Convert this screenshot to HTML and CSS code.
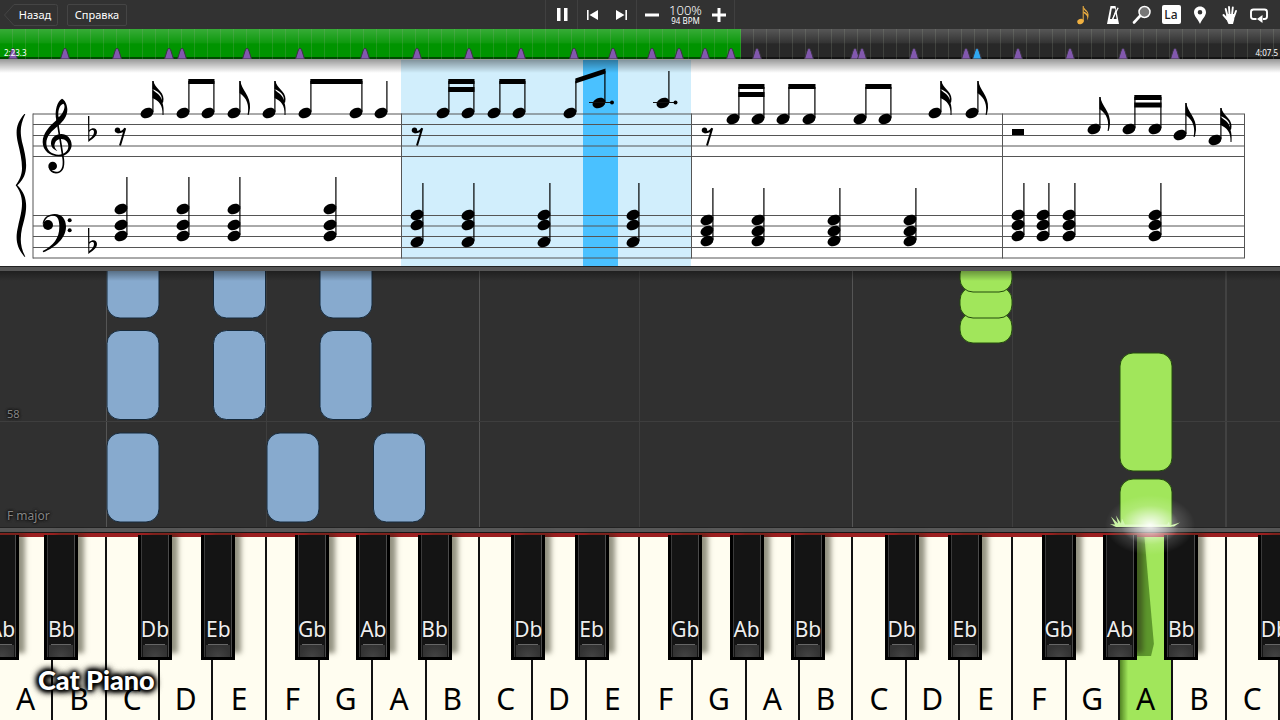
FILE: index.html
```html
<!DOCTYPE html>
<html lang="ru">

<head>
    <meta charset="UTF-8">
    <meta name="viewport" content="width=device-width, initial-scale=1.0">
    <title>Cat Piano</title>
    <link rel="stylesheet" href="styles.css">
</head>

<body>

    <header class="toolbar">
        <nav class="menu">
            <button type="button" class="menu-button back">
                <svg class="back-shape" width="54" height="22" viewBox="0 0 54 22"><path d="M10 .5H51.500Q53.500 .5 53.500 2.500V19.500Q53.500 21.500 51.500 21.500H10Q5 16 .5 11Q5 6 10 .5z" /></svg>
                Назад
            </button>
            <button type="button" class="menu-button help">Справка</button>
        </nav>

        <div class="transport">
            <button type="button" class="play" aria-label="Pause">
                <svg width="12" height="13" viewBox="0 0 12 13"><path d="M1 0h3.500v13H1zM8 0h3.500v13H8z" /></svg>
            </button>
            <div class="skip">
                <button type="button" aria-label="Previous">
                    <svg width="12" height="10" viewBox="0 0 12 10"><path d="M0 0h1.600v10H0zM11 0v10L2.500 5z" /></svg>
                </button>
                <button type="button" aria-label="Next">
                    <svg width="12" height="10" viewBox="0 0 12 10"><path d="M10.400 0H12v10h-1.600zM1 0v10l8.500-5z" /></svg>
                </button>
            </div>
            <div class="tempo">
                <button type="button" aria-label="Slower">
                    <svg width="14" height="14" viewBox="0 0 14 14"><path d="M0 5.500h14v3H0z" /></svg>
                </button>
                <div class="tempo-value">
                    <span class="percent">100%</span>
                    <span class="bpm">94 BPM</span>
                </div>
                <button type="button" aria-label="Faster">
                    <svg width="14" height="14" viewBox="0 0 14 14"><path d="M0 5.500h14v3H0zM5.500 0h3v14h-3z" /></svg>
                </button>
            </div>
        </div>

        <div class="tools">
            <button type="button" aria-label="Notes">
                <svg class="gold" width="20" height="22" viewBox="0 0 20 22"><ellipse cx="7.500" cy="17.500" rx="3.300" ry="2.600" transform="rotate(-20 7.500 17.500)" /><path d="M9.700 2h1v15.500h-1z" /><path d="M10.500 2c.5 3.500 5 4.500 5 8.500c0 1 0 4-1.200 6c.5-4-.3-5.500-3.800-7.500V7.500c2 .7 3 1.500 4 3c0-3-4-4-4-6z" /></svg>
            </button>
            <button type="button" aria-label="Metronome">
                <svg width="20" height="22" viewBox="0 0 20 22"><path fill-rule="evenodd" d="M7.500 2h5l3.500 18H4zM8.800 4.500L7 15h2.200L12.500 6l-.4-1.500zM12.500 8.500L10.400 15h3.200z" /><path d="M14.500 3.500l1.200.6L10.300 15H9z" /></svg>
            </button>
            <button type="button" aria-label="Zoom">
                <svg width="20" height="22" viewBox="0 0 20 22"><circle cx="12.500" cy="8" r="5.500" fill="#777" stroke="#fff" stroke-width="1.500" /><path d="M8 12L2 18.500" stroke="#fff" stroke-width="2.600" stroke-linecap="round" /></svg>
            </button>
            <button type="button" class="la" aria-label="Note names">La</button>
            <button type="button" aria-label="Bookmark">
                <svg width="20" height="22" viewBox="0 0 20 22"><path fill-rule="evenodd" d="M10 2.500c3.500 0 6 2.600 6 5.800C16 12 12.500 14.500 10 20C7.500 14.500 4 12 4 8.300C4 5.100 6.500 2.500 10 2.500zM10 6a2.300 2.300 0 100 4.600A2.300 2.300 0 0010 6z" /></svg>
            </button>
            <button type="button" aria-label="Hands">
                <svg width="20" height="22" viewBox="0 0 20 22"><path class="line" d="M7.500 12L5.700 5M9.500 11L9 3M12 11l.8-7.500M14 12.500L16 7M7 15L3.500 11" stroke-width="1.900" stroke-linecap="round" /><path d="M6.500 10h8.200l-.5 5.500L13 20H8.500L6 14.500z" /></svg>
            </button>
            <button type="button" aria-label="Loop">
                <svg width="20" height="22" viewBox="0 0 20 22"><path class="line" d="M7.500 15H4.500Q2 15 2 12.500V8Q2 5.500 4.500 5.500H15.500Q18 5.500 18 8V12.500Q18 15 15.500 15H14" stroke-width="1.900" /><path d="M8 15l5.500-4v8z" /></svg>
            </button>
        </div>
    </header>

    <div class="timeline">
        <input type="range" class="seek" aria-label="Position" min="0" max="1280" value="741" style="--played: 57.9%">
        <svg class="markers" viewBox="0 0 1280 11" aria-hidden="true">
            <defs><path id="marker" d="M0 0Q1 0 2 3L4.500 11H-4.500L-2 3Q-1 0 0 0z" /></defs>
            <use href="#marker" x="13" /><use href="#marker" x="65" /><use href="#marker" x="117" />
            <use href="#marker" x="169" /><use href="#marker" x="182" /><use href="#marker" x="247" />
            <use href="#marker" x="300" /><use href="#marker" x="365" /><use href="#marker" x="417" />
            <use href="#marker" x="469" /><use href="#marker" x="521" /><use href="#marker" x="574" />
            <use href="#marker" x="613" /><use href="#marker" x="652" /><use href="#marker" x="679" />
            <use href="#marker" x="705" /><use href="#marker" x="731" /><use href="#marker" x="757" />
            <use href="#marker" x="809" /><use href="#marker" x="855" /><use href="#marker" x="862" />
            <use href="#marker" x="914" /><use href="#marker" x="966" /><use href="#marker" x="977" class="current" />
            <use href="#marker" x="1018" /><use href="#marker" x="1070" /><use href="#marker" x="1123" />
            <use href="#marker" x="1175" />
        </svg>
        <span class="time elapsed">2:23.3</span>
        <span class="time total">4:07.5</span>
    </div>

    <main>
        <section class="score">
            <svg viewBox="0 60 1280 206" role="img" aria-label="Score">
                <defs>
                    <ellipse id="head" rx="6.700" ry="5" transform="rotate(-24)" />
                    <g id="quarter"><use href="#head" /><path d="M5.300 -32h1.200V-1h-1.200z" /></g>
                    <g id="eighth"><use href="#quarter" /><path d="M5.500 -32H6.500C7 -24 17 -17 16 -5Q15.600 -1 14.600 2H13.600C15.500 -8 13 -15 5.500 -20z" /></g>
                    <g id="sixteenth"><use href="#quarter" /><path d="M5.500 -32H6.500C7.500 -25 16.500 -22 16.500 -14Q16.500 -11 15.500 -10Q17 -6 16.500 2H15.500C16 -8 12 -12 5.500 -15V-23C10 -20 13.500 -18 14.800 -13C15.500 -19 10 -22 5.500 -24z" /></g>
                    <g id="rest"><circle cx="-2.500" cy="3.200" r="2.700" /><path class="stroke" d="M-2.500 5.400Q3 5.500 5.200 1.300L0 18.500" /></g>
                    <g id="chord-a"><use href="#head" y="209" /><use href="#head" y="225" /><use href="#head" y="236" /><path d="M5.300 177h1.200v58h-1.200z" /></g>
                    <g id="chord-b"><use href="#head" y="215" /><use href="#head" y="225" /><use href="#head" y="242" /><path d="M5.300 183h1.200v58h-1.200z" /></g>
                    <g id="chord-c"><use href="#head" y="220" /><use href="#head" y="231" /><use href="#head" y="241" /><path d="M5.300 188h1.200v52h-1.200z" /></g>
                    <g id="chord-d"><use href="#head" y="215" /><use href="#head" y="225" /><use href="#head" y="236" /><path d="M5.300 183h1.200v52h-1.200z" /></g>
                    <path id="flat" fill-rule="evenodd" d="M264 168h4v42C278 201 291 204 291 216C291 230 274 238 265 246zM268 216V237C276 231 282 224 282 216C282 208 273 209 268 216z" />
                </defs>

                <rect class="bar-now" x="401" y="60" width="290" height="206" />
                <rect class="beat-now" x="583" y="60" width="35" height="206" />

                <path class="staff" d="M33 114H1244M33 124.500H1244M33 135.500H1244M33 146H1244M33 156.500H1244M33 215.500H1244M33 226H1244M33 236.500H1244M33 247.500H1244M33 258H1244" />
                <path class="barline" d="M33 113.500V258.500M401.500 113.500V258.500M691.500 113.500V258.500M1002.500 113.500V258.500M1244.500 113.500V258.500" />

                <!-- brace, clefs, key signature -->
                <g transform="translate(0 60) scale(.3333)">
                    <path d="M76 162C60 195 60 215 66 245C74 275 80 300 78 325C76 350 64 366 52 376C64 388 76 404 78 430C80 455 74 475 66 505C60 535 60 560 76 590L73 590C48 560 46 535 54 500C60 472 66 455 66 430C66 408 58 390 47 376C58 362 66 345 66 325C66 300 60 275 54 250C46 215 48 190 73 162z" />
                    <path fill-rule="evenodd" d="M186 116C172 124 163 150 169 181C149 198 128 220 128 246C128 272 150 289 176 289C200 289 215 272 215 254C215 236 200 222 184 222C166 222 153 234 153 250C153 262 162 270 172 273C164 264 162 258 164 252C166 242 174 237 184 237C196 237 205 246 205 259C205 274 192 284 176 284C156 284 139 272 139 250C139 228 156 212 174 198C190 184 202 170 202 148C202 134 194 119 186 116zM190 131C199 138 190 160 176 172C172 156 178 134 190 131z" />
                    <path class="stroke clef-stem" d="M171 178L190 298C193 325 184 338 168 338Q152 337 148 322" />
                    <circle cx="158" cy="318" r="13" />
                    <circle cx="144" cy="495" r="15" />
                    <path d="M128 494C128 472 146 462 164 462C186 462 198 478 198 500C198 535 165 562 130 577L128 573C160 556 178 535 178 500C178 478 172 467 160 467C146 467 138 474 134 484z" />
                    <circle cx="209" cy="481" r="6" />
                    <circle cx="209" cy="511" r="6" />
                    <use href="#flat" />
                    <use href="#flat" y="336" />
                </g>

                <!-- bar 1 -->
                <use href="#rest" x="120" y="127" />
                <use href="#sixteenth" x="147" y="113" />
                <use href="#quarter" x="183" y="113" /><use href="#quarter" x="208" y="113" />
                <path d="M188.300 79H214.500v5H188.300z" />
                <use href="#eighth" x="234" y="113" />
                <use href="#sixteenth" x="269" y="113" />
                <use href="#quarter" x="305" y="113" /><use href="#quarter" x="356" y="113" />
                <path d="M310.300 79H362.500v5H310.300z" />
                <use href="#quarter" x="381" y="113" />
                <use href="#chord-a" x="121" /><use href="#chord-a" x="183" />
                <use href="#chord-a" x="234" /><use href="#chord-a" x="330" />

                <!-- bar 2 -->
                <use href="#rest" x="417" y="127" />
                <use href="#quarter" x="443" y="113" /><use href="#quarter" x="468" y="113" />
                <path d="M448.300 79H474.500v5H448.300zM448.300 87H474.500v5H448.300z" />
                <use href="#quarter" x="494" y="113" /><use href="#quarter" x="519" y="113" />
                <path d="M499.300 79H525.500v5H499.300z" />
                <use href="#quarter" x="570" y="113" />
                <use href="#quarter" x="599" y="103" />
                <path d="M575.300 78.500L605.500 68.500V73.500L575.300 83.500z" />
                <use href="#quarter" x="663" y="103" />
                <path class="staff ledger" d="M589 102.500H611M653 102.500H675" />
                <circle cx="612" cy="102.500" r="2" /><circle cx="675.500" cy="102.500" r="2" />
                <use href="#chord-b" x="417" /><use href="#chord-b" x="468" />
                <use href="#chord-b" x="544" /><use href="#chord-b" x="633" />

                <!-- bar 3 -->
                <use href="#rest" x="707" y="127" />
                <use href="#quarter" x="733" y="119" /><use href="#quarter" x="758" y="119" />
                <path d="M738.300 84H764.500v5H738.300zM738.300 92H764.500v5H738.300z" />
                <use href="#quarter" x="783" y="119" /><use href="#quarter" x="809" y="119" />
                <path d="M788.300 84H815.500v5H788.300z" />
                <use href="#quarter" x="860" y="119" /><use href="#quarter" x="885" y="119" />
                <path d="M865.300 84H891.500v5H865.300z" />
                <use href="#sixteenth" x="935" y="113" />
                <use href="#eighth" x="972" y="113" />
                <use href="#chord-c" x="707" /><use href="#chord-c" x="758" />
                <use href="#chord-c" x="834" /><use href="#chord-c" x="910" />

                <!-- bar 4 -->
                <path d="M1012 129h12v6h-12z" />
                <use href="#eighth" x="1094" y="129" />
                <use href="#quarter" x="1129" y="129" /><use href="#quarter" x="1155" y="129" />
                <path d="M1134.300 95H1161.500v5H1134.300zM1134.300 102.500H1161.500v5H1134.300z" />
                <use href="#eighth" x="1180" y="135" />
                <use href="#sixteenth" x="1215" y="140" />
                <use href="#chord-d" x="1018" /><use href="#chord-d" x="1043" />
                <use href="#chord-d" x="1069" /><use href="#chord-d" x="1155" />
            </svg>
        </section>

        <section class="roll">
            <svg viewBox="0 271 1280 256" role="img" aria-label="Falling notes">
                <path class="grid-c" d="M106.500 271V527M479.500 271V527M852.500 271V527M1226 271V527" />
                <path class="grid-f" d="M266.500 271V527M639.500 271V527M1012.500 271V527M0 421.500H1280" />

                <g class="left-hand">
                    <rect x="107" y="229" width="52" height="89" rx="13" />
                    <rect x="213.500" y="229" width="52" height="89" rx="13" />
                    <rect x="320" y="229" width="52" height="89" rx="13" />
                    <rect x="107" y="330.500" width="52" height="89" rx="13" />
                    <rect x="213.500" y="330.500" width="52" height="89" rx="13" />
                    <rect x="320" y="330.500" width="52" height="89" rx="13" />
                    <rect x="107" y="433" width="52" height="89" rx="13" />
                    <rect x="267" y="433" width="52" height="89" rx="13" />
                    <rect x="373.500" y="433" width="52" height="89" rx="13" />
                </g>
                <g class="right-hand">
                    <rect x="960" y="313" width="52" height="30" rx="13" />
                    <rect x="960" y="287" width="52" height="31" rx="13" />
                    <rect x="960" y="261" width="52" height="31" rx="13" />
                    <rect x="1120" y="353" width="52" height="118" rx="13" />
                    <rect x="1120" y="479" width="52" height="70" rx="13" />
                </g>
                <path class="spark" d="M1116 527l-6-3l5 .5l-4-8l7 7l-2-8l5 8l1-5l3 6h42l2-3l1 4l10-3l-6 4z" />
            </svg>
            <span class="roll-label bar-number">58</span>
            <span class="roll-label key-name">F major</span>
            <div class="glow"></div>
        </section>

        <section class="piano">
            <div class="key">A<span class="black g first">Ab</span><span class="black a">Bb</span></div>
            <div class="key">B</div>
            <div class="key">C<span class="black c">Db</span></div>
            <div class="key">D<span class="black d">Eb</span></div>
            <div class="key">E</div>
            <div class="key">F<span class="black f">Gb</span></div>
            <div class="key">G<span class="black g">Ab</span></div>
            <div class="key">A<span class="black a">Bb</span></div>
            <div class="key">B</div>
            <div class="key">C<span class="black c">Db</span></div>
            <div class="key">D<span class="black d">Eb</span></div>
            <div class="key">E</div>
            <div class="key">F<span class="black f">Gb</span></div>
            <div class="key">G<span class="black g">Ab</span></div>
            <div class="key">A<span class="black a">Bb</span></div>
            <div class="key">B</div>
            <div class="key">C<span class="black c">Db</span></div>
            <div class="key">D<span class="black d">Eb</span></div>
            <div class="key">E</div>
            <div class="key">F<span class="black f">Gb</span></div>
            <div class="key">G<span class="black g">Ab</span></div>
            <div class="key pressed">A<span class="black a">Bb</span></div>
            <div class="key">B</div>
            <div class="key">C<span class="black c">Db</span></div>
            <div class="channel">Cat Piano</div>
        </section>
    </main>

</body>
</html>
```
FILE: styles.css
```css
* {
    box-sizing: border-box;
}

body {
    margin: 0;
    font-family: 'Noto Sans', 'Open Sans', sans-serif;
    background-color: #303030;
    color: #fff;
    overflow-x: hidden;
}

button {
    padding: 0;
    border: none;
    background: none;
    color: #fff;
    font-family: inherit;
    cursor: pointer;
}

svg {
    display: block;
}

/* toolbar */

.toolbar {
    display: grid;
    grid-template-columns: 1fr auto 1fr;
    align-items: center;
    height: 29px;
    background-color: #323232;
}

.toolbar svg {
    fill: #fff;
}

.menu {
    display: flex;
    gap: 9px;
    padding-left: 4px;
}

.menu-button {
    position: relative;
    height: 22px;
    font-size: 11px;
    line-height: 20px;
}

.back {
    width: 54px;
    padding-left: 8px;
}

.toolbar .back-shape {
    position: absolute;
    left: 0;
    top: 0;
    fill: none;
    stroke: #454545;
}

.help {
    width: 60px;
    border: 1px solid #454545;
    border-radius: 2px;
}

.transport {
    display: flex;
    height: 29px;
    border-left: 1px solid #404040;
    border-right: 1px solid #404040;
}

.transport button {
    display: flex;
    align-items: center;
    justify-content: center;
    height: 29px;
}

.play {
    width: 31px;
}

.skip {
    display: flex;
    width: 60px;
    justify-content: space-between;
    padding: 0 9px;
    border-left: 1px solid #404040;
    border-right: 1px solid #404040;
}

.tempo {
    display: flex;
    align-items: center;
    justify-content: space-between;
    width: 97px;
    padding: 0 8px;
}

.tempo-value {
    display: flex;
    flex-direction: column;
    align-items: center;
}

.percent {
    font-size: 13px;
    font-weight: 300;
    line-height: 13px;
}

.bpm {
    font-size: 8px;
    line-height: 8px;
}

.tools {
    display: flex;
    align-items: center;
    justify-content: space-between;
    justify-self: end;
    width: 196px;
    margin-right: 11px;
}

.toolbar .gold {
    fill: #f0b040;
}

.toolbar .line {
    fill: none;
    stroke: #fff;
}

.tools .la {
    width: 19px;
    height: 19px;
    border-radius: 2px;
    background-color: #fff;
    color: #222;
    font-size: 12px;
    font-weight: 500;
    line-height: 19px;
}

/* timeline */

.timeline {
    position: relative;
    height: 31px;
    border-bottom: 1px solid #999;
}

.seek {
    appearance: none;
    display: block;
    width: 100%;
    height: 30px;
    margin: 0;
    background:
        repeating-linear-gradient(90deg, transparent 0 12px, rgba(160, 170, 150, 0.2) 12px 13px),
        linear-gradient(rgba(255, 255, 255, 0.22), rgba(255, 255, 255, 0.06) 45%, transparent 50%, transparent 94%, rgba(0, 0, 0, 0.5) 95%),
        linear-gradient(90deg, #009400 var(--played), #282828 var(--played));
}

.seek::-webkit-slider-thumb {
    appearance: none;
    width: 1px;
    height: 30px;
}

.markers {
    position: absolute;
    left: 0;
    bottom: 0;
    width: 100%;
    fill: #8258ae;
    stroke: #3a3540;
    pointer-events: none;
}

.markers .current {
    fill: #30a8f0;
}

.time {
    position: absolute;
    bottom: 1px;
    font-size: 8px;
    line-height: 10px;
    pointer-events: none;
}

.elapsed {
    left: 4px;
}

.total {
    right: 2px;
}

/* score */

.score {
    position: relative;
    background-color: #fff;
}

.score::after {
    content: '';
    position: absolute;
    left: 0;
    right: 0;
    top: 0;
    height: 13px;
    background: linear-gradient(rgba(0, 0, 0, 0.38), transparent);
}

.score svg,
.roll svg {
    width: 100%;
}

.bar-now {
    fill: #d1eefc;
}

.beat-now {
    fill: #4ac1ff;
}

.staff {
    stroke: #555;
}

.ledger {
    stroke: #111;
}

.barline {
    stroke: #555;
    stroke-width: 1px;
}

.stroke {
    fill: none;
    stroke: #000;
    stroke-width: 2px;
}

.clef-stem {
    stroke-width: 5px;
}

/* falling notes */

.roll {
    position: relative;
    border-top: 5px solid #555;
    background-color: #303030;
    z-index: 2;
}

.roll::before {
    content: '';
    position: absolute;
    left: 0;
    right: 0;
    top: -5px;
    height: 15px;
    background: linear-gradient(#222 0 1px, transparent 1px 5px, rgba(0, 0, 0, 0.35) 5px, transparent);
}

.grid-c {
    stroke: #555;
}

.grid-f {
    stroke: #3e3e3e;
}

.left-hand {
    fill: #87aace;
    stroke: #172b3d;
}

.right-hand {
    fill: #a1e65b;
    stroke: #234a0c;
}

.spark {
    fill: #c4f29a;
}

.roll-label {
    position: absolute;
    left: 7px;
    color: #858585;
    line-height: 16px;
    text-shadow: 0 0 3px #000, 0 0 3px #000;
}

.bar-number {
    top: 135px;
    font-size: 11px;
}

.key-name {
    bottom: 3px;
    font-size: 12px;
}

.glow {
    position: absolute;
    left: 90%;
    bottom: -28px;
    width: 90px;
    height: 60px;
    margin-left: -47px;
    background: radial-gradient(closest-side, rgba(255, 255, 255, 0.95), rgba(255, 255, 255, 0.6) 30%, rgba(255, 255, 255, 0.15) 65%, transparent);
}

/* piano */

.piano {
    position: relative;
    display: flex;
    height: 193px;
    overflow: hidden;
    padding-top: 10px;
    background: linear-gradient(#222 0 1px, #585858 1px 5px, #181818 5px 6px, #9c2020 6px 10px, #000 10px);
}

.key {
    position: relative;
    display: flex;
    flex: 1;
    align-items: flex-end;
    justify-content: center;
    border-right: 2px solid #111;
    background-color: #fffdf0;
    color: #000;
    font-size: 30px;
    line-height: 42px;
}

.pressed {
    background: linear-gradient(90deg, rgba(30, 70, 0, 0.6), transparent 16%), #a1e65b;
}

.black {
    position: absolute;
    left: 100%;
    top: -2px;
    width: 34px;
    height: 125px;
    margin-left: -15px;
    padding-top: 80px;
    z-index: 1;
    border: solid #000;
    border-width: 0 3px 3px;
    background:
        radial-gradient(ellipse at 50% 100%, #444, #333 70%) 50% 100% / 24px 12px no-repeat,
        linear-gradient(#666, #666) 50% 109px / 20px 1px no-repeat,
        linear-gradient(90deg, #3a3a3a 0 1px, transparent 1px 27px, #4a4a4a 27px),
        #141414;
    box-shadow: 9px -4px 5px -3px rgba(40, 40, 20, 0.5);
    color: #eee;
    font-size: 21px;
    line-height: 28px;
    text-shadow: 0 0 2px #000;
    display: flex;
    justify-content: center;
}

.black.c {
    margin-left: -20px;
}

.black.d {
    margin-left: -10px;
}

.black.f {
    margin-left: -23px;
}

.black.a {
    margin-left: -7px;
}

.black.first {
    left: 0;
}

.pressed::before {
    content: '';
    position: absolute;
    left: 15px;
    top: 0;
    width: 19px;
    height: 119px;
    background: rgba(50, 100, 15, 0.6);
    clip-path: polygon(0 0, 50% 0, 100% 90%, 85% 100%, 0 100%);
}

.channel {
    position: absolute;
    left: 38px;
    bottom: 24px;
    z-index: 2;
    font-family: Lato, sans-serif;
    font-size: 27px;
    font-weight: 900;
    line-height: 32px;
    text-shadow: 0 0 3px #000, 0 0 4px #000, 0 0 5px #000, 0 0 6px #000, 0 0 7px #000, 0 0 8px #000, 0 0 9px #000;
}
```
